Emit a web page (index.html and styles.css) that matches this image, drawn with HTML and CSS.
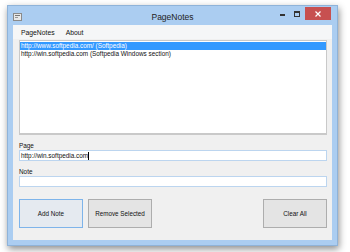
FILE: index.html
```html
<!DOCTYPE html>
<html lang="en">
<head>
    <meta charset="UTF-8">
    <title>PageNotes</title>
    <link rel="stylesheet" href="styles.css">
</head>
<body>

<div class="window">
    <div class="titlebar">
        <svg class="app-icon" width="9" height="8" viewBox="0 0 9 8">
            <rect x="0.5" y="0.5" width="8" height="7" fill="#e8e8e8" stroke="#8a8a8a"/>
            <rect x="2" y="2" width="5" height="1" fill="#777"/>
            <rect x="2" y="4" width="3" height="1" fill="#999"/>
        </svg>
        <div class="title">PageNotes</div>
        <div class="controls">
            <span class="ctl-min"></span>
            <span class="ctl-max"></span>
            <span class="ctl-close">
                <svg width="6" height="6" viewBox="0 0 6 6"><path d="M0.5 0.5 L5.5 5.5 M5.5 0.5 L0.5 5.5" stroke="#fff" stroke-width="1.2"/></svg>
            </span>
        </div>
    </div>

    <div class="client">
        <div class="menubar">
            <span>PageNotes</span>
            <span>About</span>
        </div>

        <div class="listbox">
            <div class="item selected">http://www.softpedia.com/ (Softpedia)</div>
            <div class="item">http://win.softpedia.com (Softpedia Windows section)</div>
        </div>

        <div class="label">Page</div>
        <div class="textbox">http://win.softpedia.com<span class="caret"></span></div>

        <div class="label">Note</div>
        <div class="textbox"></div>

        <div class="buttons">
            <button class="btn default">Add Note</button>
            <button class="btn">Remove Selected</button>
            <span class="spacer"></span>
            <button class="btn">Clear All</button>
        </div>
    </div>
</div>

</body>
</html>
```

FILE: styles.css
```css
body {
    margin: 0;
    background: #ffffff;
    font-family: "Liberation Sans", Arial, sans-serif;
    width: 350px;
    height: 252px;
    overflow: hidden;
}

.window {
    margin: 5px 0 0 7px;
    width: 319px;
    height: 234px;
    background: #abcdf1;
    padding: 0 5px 5px 5px;
    display: flex;
    flex-direction: column;
    box-shadow: 1px 3px 7px rgba(0,0,0,0.45);
    border: 1px solid #8fb3d9;
    box-sizing: content-box;
}

.titlebar {
    height: 19px;
    display: flex;
    align-items: center;
    position: relative;
}

.app-icon {
    margin-top: 2px;
}

.title {
    position: absolute;
    left: 0;
    right: 0;
    text-align: center;
    font-size: 8.5px;
    color: #222;
    top: 6px;
}

.controls {
    margin-left: auto;
    display: flex;
    align-items: flex-start;
    height: 100%;
    margin-right: 1px;
}

.ctl-min {
    width: 5px;
    height: 2px;
    background: #333;
    margin: 8px 9px 0 0;
}

.ctl-max {
    width: 4px;
    height: 3px;
    border: 1px solid #333;
    border-top-width: 2px;
    margin: 5px 5px 0 0;
}

.ctl-close {
    width: 26px;
    height: 13px;
    background: #c75050;
    display: flex;
    align-items: center;
    justify-content: center;
    margin-top: 1px;
}

.client {
    flex: 1;
    background: #f0f0f0;
    display: flex;
    flex-direction: column;
    padding: 0 5px 0 6px;
    font-size: 6.4px;
    color: #111;
}

.menubar {
    height: 14px;
    margin: 0 -5px 0 -6px;
    padding-left: 8px;
    display: flex;
    gap: 11px;
    align-items: center;
    font-size: 6.8px;
    background: #f5f6f7;
}

.listbox {
    margin-top: 1px;
    height: 91px;
    background: #fff;
    border: 1px solid #c9c9c9;
    border-bottom-width: 2px;
    padding-top: 1px;
}

.item {
    height: 8px;
    line-height: 8px;
    padding-left: 1px;
    white-space: nowrap;
}

.item.selected {
    background: #3399ff;
    color: #fff;
}

.label {
    margin-top: 6px;
    height: 9px;
    line-height: 9px;
}

.textbox {
    height: 9px;
    line-height: 9px;
    background: #fff;
    border: 1px solid #bcd5ef;
    padding-left: 1px;
    display: flex;
    align-items: center;
}

.caret {
    width: 1px;
    height: 8px;
    background: #000;
}

.buttons {
    margin-top: 12px;
    display: flex;
    gap: 5px;
}

.btn {
    width: 64px;
    height: 29px;
    font-family: "Liberation Sans", Arial, sans-serif;
    font-size: 6.3px;
    color: #111;
    background: #e4e4e4;
    border: 1px solid #adadad;
    padding: 0;
    margin: 0;
}

.btn.default {
    border-color: #7eb4ea;
    background: #e5eaf0;
}

.spacer {
    flex: 1;
}
```
